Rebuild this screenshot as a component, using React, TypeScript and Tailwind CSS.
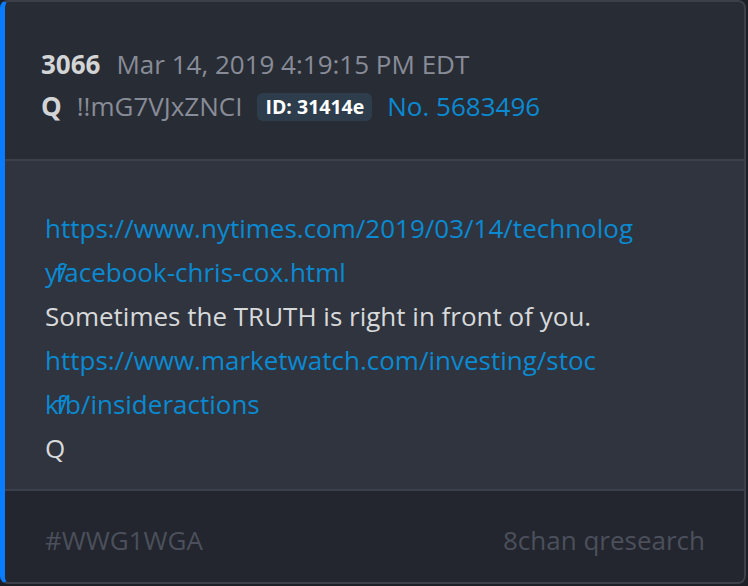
export default function App() {
  return (
    <div className="w-[748px] h-[586px] bg-[#1c1f25] font-['Open_Sans',sans-serif]">
      <div className="w-[746px] h-[584px] flex flex-col rounded-lg overflow-hidden border-2 border-l-[5px] border-[#3b404b] border-l-[#0a7cff] bg-[#282c34]">
        {/* header */}
        <div className="pl-[36px] pt-[41px] pb-[31px] border-b-2 border-[#3b404b] text-[26px] leading-[43px]">
          <div className="flex items-baseline">
            <span className="font-bold text-[#d3d4d6]">3066</span>
            <span className="ml-[16px] text-[#888c98]">Mar 14, 2019 4:19:15 PM EDT</span>
          </div>
          <div className="flex items-center -mt-[1px]">
            <span className="font-bold text-[#d3d4d6]">Q</span>
            <span className="ml-[15px] text-[#888c98]">!!mG7VJxZNCI</span>
            <span className="ml-[15px] px-[8px] h-[28px] flex items-center rounded-md bg-[#2d3d4c] text-white font-bold text-[19.5px]">ID: 31414e</span>
            <span className="ml-[15px] text-[#0a8ad2]">No. 5683496</span>
          </div>
        </div>

        {/* body */}
        <div className="flex-1 bg-[#2f343e] pl-[40px] pt-[45px] text-[26px] leading-[44px]">
          <div className="text-[#0a8ad2]">https://www.nytimes.com/2019/03/14/technolog</div>
          <div className="text-[#0a8ad2]">
            y<span className="-mr-[12px]">/</span>facebook-chris-cox.html
          </div>
          <div className="text-[#d8d9db]">Sometimes the TRUTH is right in front of you.</div>
          <div className="text-[#0a8ad2]">https://www.marketwatch.com/investing/stoc</div>
          <div className="text-[#0a8ad2]">
            k<span className="-mr-[12px]">/</span>fb/insideractions
          </div>
          <div className="text-[#d8d9db]">Q</div>
        </div>

        {/* footer */}
        <div className="h-[93px] shrink-0 border-t-2 border-[#3b404b] bg-[#23262e] pl-[40px] pr-[39px] pt-[8px] flex items-center justify-between text-[26px] text-[#4b505c]">
          <span>#WWG1WGA</span>
          <span>8chan qresearch</span>
        </div>
      </div>
    </div>
  );
}
